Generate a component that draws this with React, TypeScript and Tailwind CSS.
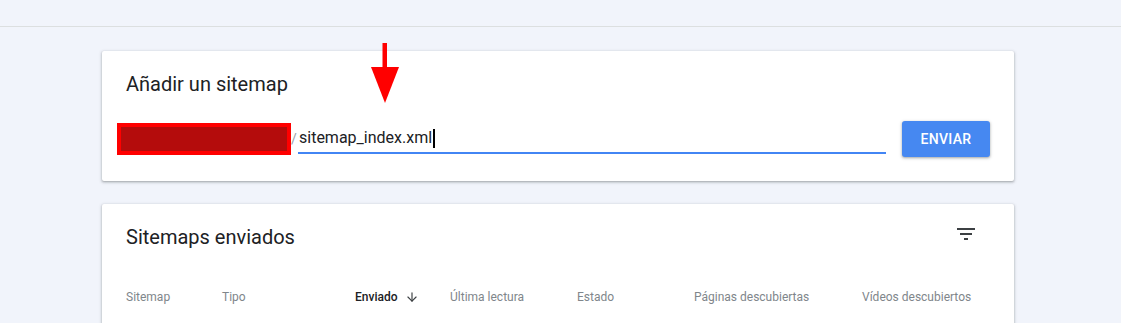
import { ArrowDown } from "lucide-react";

const cardShadow =
  "shadow-[0_1px_2px_0_rgba(60,64,67,0.3),0_1px_3px_1px_rgba(60,64,67,0.15)]";

function FilterIcon() {
  return (
    <svg width="24" height="24" viewBox="0 0 24 24" fill="#3c4043">
      <path d="M3 6h18v2H3zM6 11h12v2H6zM10 16h4v2h-4z" />
    </svg>
  );
}

const columns = [
  "Sitemap",
  "Tipo",
  "Enviado",
  "Última lectura",
  "Estado",
  "Páginas descubiertas",
  "Vídeos descubiertos",
];

export default function App() {
  return (
    <div className="relative h-[323px] w-[1121px] overflow-hidden bg-[#f1f4fb] font-['Roboto',sans-serif]">
      {/* Top strip */}
      <div className="h-[27px] border-b border-[#dcdfe0]" />

      {/* Añadir un sitemap */}
      <div className={`ml-[102px] mt-[24px] h-[130px] w-[912px] rounded-[2px] bg-white ${cardShadow}`}>
        <div className="px-6 pt-[21px] text-[20px] leading-[24px] text-[#202124]">Añadir un sitemap</div>
        <div className="mt-[25px] flex items-center pl-[15px] pr-6">
          <div className="h-[32px] w-[174px] border-4 border-[#ff0000] bg-[#b40c0c]" />
          <span className="w-[7px] text-[14px] text-[#9aa0a6]">/</span>
          <div className="flex h-[30px] w-[588px] items-center border-b-2 border-[#4285f4] pl-px">
            <span className="text-[16px] leading-[20px] text-[#202124]">sitemap_index.xml</span>
            <span className="ml-px h-[19px] w-[2px] bg-black" />
          </div>
          <button className="ml-4 h-[36px] w-[88px] rounded-[3px] bg-[#4688f1] text-[14px] font-medium tracking-[0.3px] text-white shadow-[0_1px_2px_rgba(60,64,67,0.3),0_1px_3px_1px_rgba(60,64,67,0.15)]">
            ENVIAR
          </button>
        </div>
      </div>

      {/* Sitemaps enviados */}
      <div className={`ml-[102px] mt-[23px] h-[140px] w-[912px] rounded-[2px] bg-white ${cardShadow}`}>
        <div className="flex items-start justify-between pl-6 pr-[36px]">
          <div className="pt-[21px] text-[20px] leading-[24px] text-[#202124]">Sitemaps enviados</div>
          <div className="pt-[18px]">
            <FilterIcon />
          </div>
        </div>
        <div className="mt-[24px] grid h-[48px] grid-cols-[96px_133px_95px_127px_117px_168px_1fr] items-center pl-6 text-[12px] text-[#80868b]">
          {columns.map((c) =>
            c === "Enviado" ? (
              <div key={c} className="flex items-center gap-[7px] font-medium text-[#202124]">
                {c}
                <ArrowDown size={14} strokeWidth={2} className="text-[#3c4043]" />
              </div>
            ) : (
              <div key={c}>{c}</div>
            )
          )}
        </div>
      </div>

      {/* Red annotation arrow */}
      <svg className="absolute left-[370px] top-[43px]" width="30" height="62" viewBox="0 0 30 62">
        <rect x="12.5" y="0" width="4.5" height="28" fill="#ff0000" />
        <polygon points="1,24 29,24 15,60" fill="#ff0000" />
      </svg>
    </div>
  );
}
